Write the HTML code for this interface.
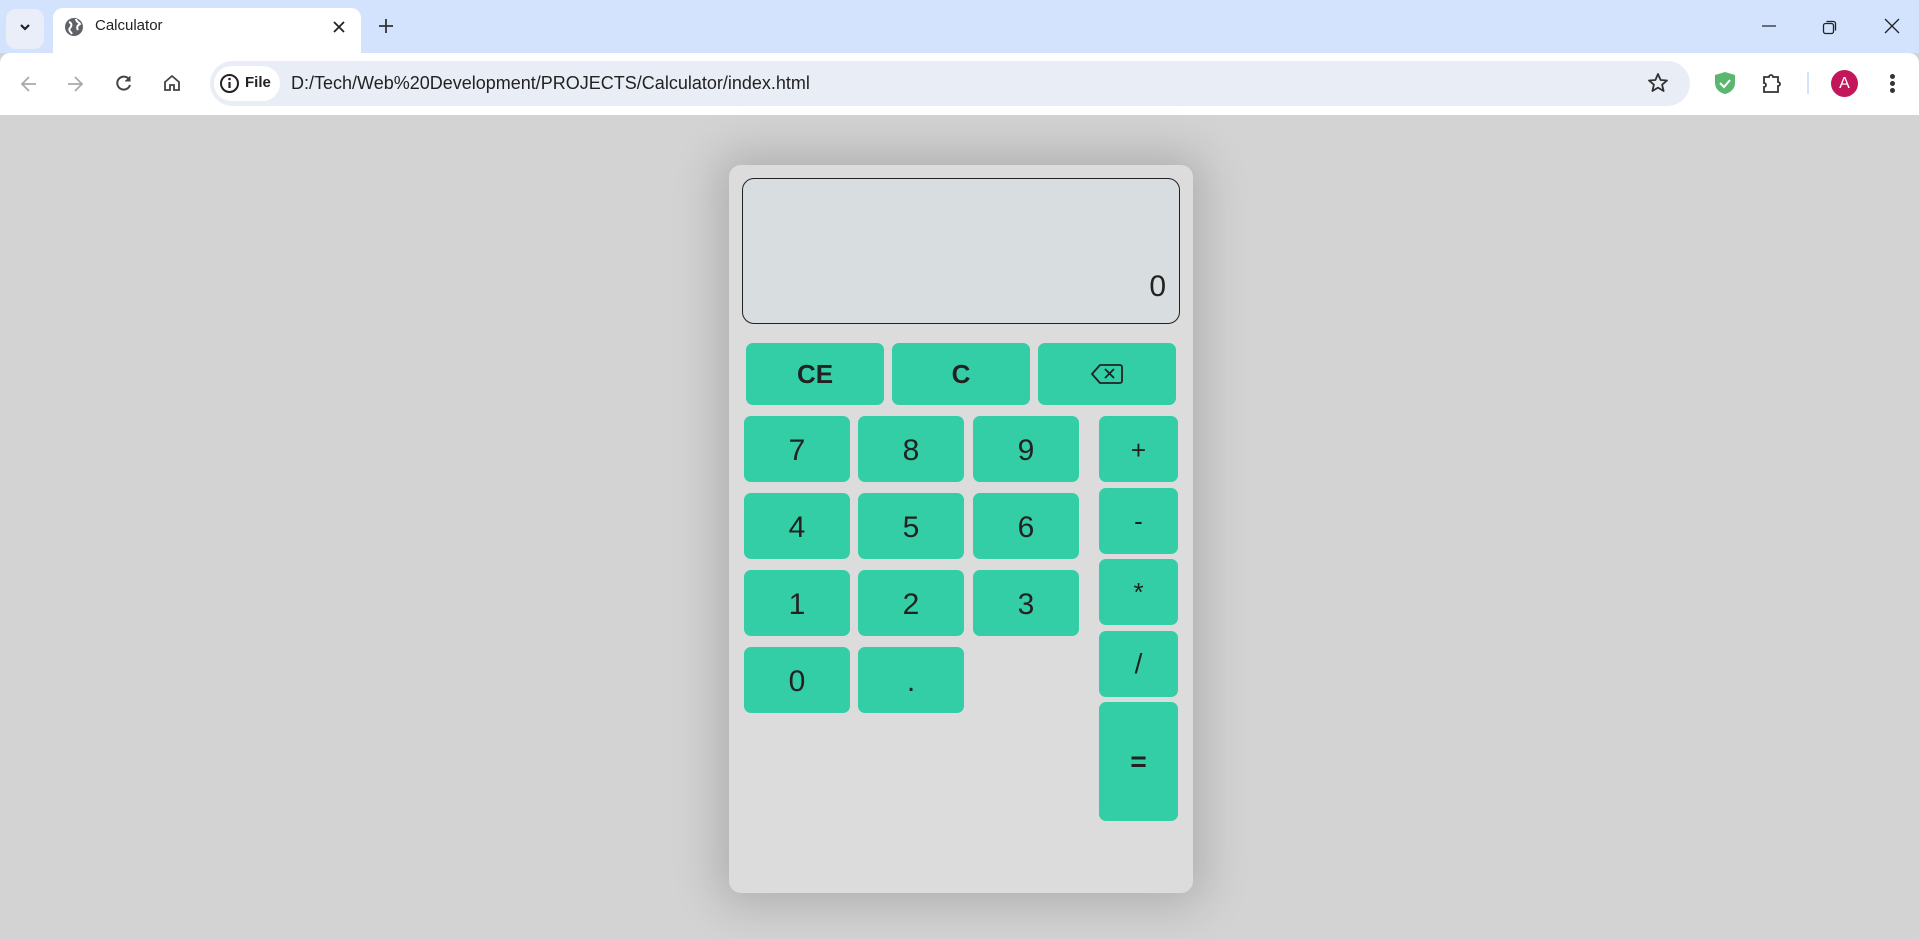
<!DOCTYPE html>
<html><head><meta charset="utf-8"><style>
*{box-sizing:border-box;margin:0;padding:0}
body{width:1919px;height:939px;overflow:hidden;background:#d3d3d3;font-family:"Liberation Sans",sans-serif;position:relative}
.abs{position:absolute}
#tabs{left:0;top:0;width:1919px;height:53px;background:#d3e3fd}
#tb{left:0;top:53px;width:1919px;height:62px;background:#fff;border-radius:10px 10px 0 0}
.tab{left:53px;top:8px;width:308px;height:45px;background:#fff;border-radius:10px 10px 0 0}
#omni{left:210px;top:61px;width:1480px;height:45px;border-radius:23px;background:#e9eef6}
.btn{position:absolute;background:#33cea6;border-radius:7px;color:#222;display:flex;align-items:center;justify-content:center;font-size:30px}
</style></head><body>
<div id="tabs" class="abs"></div>
<div class="abs" style="left:6px;top:9px;width:38px;height:40px;border-radius:10px;background:#e9eef9"></div>
<svg class="abs" style="left:17px;top:21px" width="16" height="12"><path d="M4 4l4 4 4-4" stroke="#222" stroke-width="2.2" fill="none"/></svg>
<div class="tab abs"></div>
<svg class="abs" style="left:64px;top:17px" width="20" height="20"><circle cx="10" cy="10" r="9" fill="#5f6368"/><path d="M5 5c3 1 3 4 1 6s1 4 2 6M12 2c0 3 3 3 4 5-2 1-4 3-2 6" stroke="#fff" stroke-width="2" fill="none"/></svg>
<div class="abs" style="left:95px;top:17px;font-size:15px;color:#222">Calculator</div>
<svg class="abs" style="left:332px;top:20px" width="14" height="14"><path d="M2 2l10 10M12 2L2 12" stroke="#222" stroke-width="1.8"/></svg>
<svg class="abs" style="left:378px;top:18px" width="16" height="16"><path d="M8 1v14M1 8h14" stroke="#333" stroke-width="1.8"/></svg>
<svg class="abs" style="left:1762px;top:25px" width="14" height="2"><path d="M0 1h14" stroke="#222" stroke-width="1.2"/></svg>
<svg class="abs" style="left:1822px;top:19px" width="16" height="16"><rect x="1.5" y="4.5" width="10" height="10" rx="2" stroke="#222" fill="none" stroke-width="1.3"/><path d="M4.5 2.5h7a2 2 0 0 1 2 2v7" stroke="#222" fill="none" stroke-width="1.3"/></svg>
<svg class="abs" style="left:1884px;top:18px" width="16" height="16"><path d="M1 1l14 14M15 1L1 15" stroke="#222" stroke-width="1.3"/></svg>
<div id="tb" class="abs"></div>
<svg class="abs" style="left:19px;top:74px" width="20" height="20"><path d="M17 10H4M10 3l-7 7 7 7" stroke="#aaa" stroke-width="1.8" fill="none"/></svg>
<svg class="abs" style="left:65px;top:74px" width="20" height="20"><path d="M3 10h13M10 3l7 7-7 7" stroke="#aaa" stroke-width="1.8" fill="none"/></svg>
<svg class="abs" style="left:114px;top:73px" width="20" height="20"><path d="M15.5 7A6.5 6.5 0 1 0 16 12" stroke="#444" stroke-width="2" fill="none"/><path d="M16 3v5h-5" fill="#444" stroke="#444" stroke-width="1"/></svg>
<svg class="abs" style="left:162px;top:73px" width="20" height="20"><path d="M3 9l7-6 7 6v8h-5v-5H8v5H3z" stroke="#444" stroke-width="1.8" fill="none"/></svg>
<div id="omni" class="abs"></div>
<div class="abs" style="left:214px;top:66px;width:66px;height:35px;border-radius:18px;background:#fff"></div>
<svg class="abs" style="left:219px;top:73px" width="21" height="21"><circle cx="10.5" cy="10.5" r="8.5" stroke="#222" stroke-width="2" fill="none"/><path d="M10.5 9v6" stroke="#222" stroke-width="2.2"/><circle cx="10.5" cy="6" r="1.3" fill="#222"/></svg>
<div class="abs" style="left:245px;top:74px;font-size:15px;font-weight:bold;color:#222">File</div>
<div class="abs" style="left:291px;top:73px;font-size:18px;color:#222">D:/Tech/Web%20Development/PROJECTS/Calculator/index.html</div>
<svg class="abs" style="left:1647px;top:72px" width="22" height="22"><path d="M11 2l2.6 6 6.4.5-4.9 4.2 1.5 6.3L11 15.6 5.4 19l1.5-6.3L2 8.5 8.4 8z" stroke="#333" stroke-width="1.8" fill="none" stroke-linejoin="round"/></svg>
<svg class="abs" style="left:1714px;top:71px" width="22" height="24"><path d="M11 1l10 3v8c0 6-5 10-10 11C6 22 1 18 1 12V4z" fill="#5bb66e"/><path d="M6 12l4 4 6-7" stroke="#fff" stroke-width="2" fill="none"/></svg>
<svg class="abs" style="left:1762px;top:72px" width="22" height="22"><path d="M2 5h5a2 2 0 0 1 4 0h5v5a2 2 0 0 1 0 4v6H2v-5a2 2 0 0 0 0-4z" stroke="#333" stroke-width="1.8" fill="none"/></svg>
<div class="abs" style="left:1807px;top:72px;width:2px;height:22px;background:#d3e3fd"></div>
<div class="abs" style="left:1831px;top:70px;width:27px;height:27px;border-radius:50%;background:#c2185b;color:#fff;font-size:16px;text-align:center;line-height:27px">A</div>
<div class="abs" style="left:1890px;top:74px;width:5px;height:5px;border-radius:50%;background:#333"></div>
<div class="abs" style="left:1890px;top:81px;width:5px;height:5px;border-radius:50%;background:#333"></div>
<div class="abs" style="left:1890px;top:88px;width:5px;height:5px;border-radius:50%;background:#333"></div>

<div class="abs" style="left:729px;top:165px;width:464px;height:728px;background:#dcdcdc;border-radius:12px;box-shadow:0 0 45px 12px rgba(0,0,0,0.17)"></div>
<div class="abs" style="left:742px;top:178px;width:438px;height:146px;background:#d8dde0;border:1px solid #222;border-radius:12px"></div>
<div class="abs" style="left:1100px;top:270px;width:66px;text-align:right;font-size:30px;color:#222">0</div>

<div class="btn" style="left:746px;top:343px;width:138px;height:62px;font-weight:bold;font-size:26px">CE</div>
<div class="btn" style="left:892px;top:343px;width:138px;height:62px;font-weight:bold;font-size:26px">C</div>
<div class="btn" style="left:1038px;top:343px;width:138px;height:62px"><svg width="34" height="22"><path d="M10 2h20a2 2 0 0 1 2 2v14a2 2 0 0 1-2 2H10l-8-9z" stroke="#222" stroke-width="1.8" fill="none" stroke-linejoin="round"/><path d="M15 6l9 9M24 6l-9 9" stroke="#222" stroke-width="1.8"/></svg></div>

<div class="btn" style="left:744px;top:416px;width:106px;height:66px;padding-top:3px">7</div>
<div class="btn" style="left:858px;top:416px;width:106px;height:66px;padding-top:3px">8</div>
<div class="btn" style="left:973px;top:416px;width:106px;height:66px;padding-top:3px">9</div>
<div class="btn" style="left:744px;top:493px;width:106px;height:66px;padding-top:3px">4</div>
<div class="btn" style="left:858px;top:493px;width:106px;height:66px;padding-top:3px">5</div>
<div class="btn" style="left:973px;top:493px;width:106px;height:66px;padding-top:3px">6</div>
<div class="btn" style="left:744px;top:570px;width:106px;height:66px;padding-top:3px">1</div>
<div class="btn" style="left:858px;top:570px;width:106px;height:66px;padding-top:3px">2</div>
<div class="btn" style="left:973px;top:570px;width:106px;height:66px;padding-top:3px">3</div>
<div class="btn" style="left:744px;top:647px;width:106px;height:66px;padding-top:3px">0</div>
<div class="btn" style="left:858px;top:647px;width:106px;height:66px;padding-top:3px">.</div>

<div class="btn" style="left:1099px;top:416px;width:79px;height:66px;font-size:26px;padding-top:3px">+</div>
<div class="btn" style="left:1099px;top:488px;width:79px;height:66px;font-size:26px">-</div>
<div class="btn" style="left:1099px;top:559px;width:79px;height:66px;font-size:26px">*</div>
<div class="btn" style="left:1099px;top:631px;width:79px;height:66px;font-size:28px">/</div>
<div class="btn" style="left:1099px;top:702px;width:79px;height:119px;font-size:28px;font-weight:bold">=</div>
</body></html>
